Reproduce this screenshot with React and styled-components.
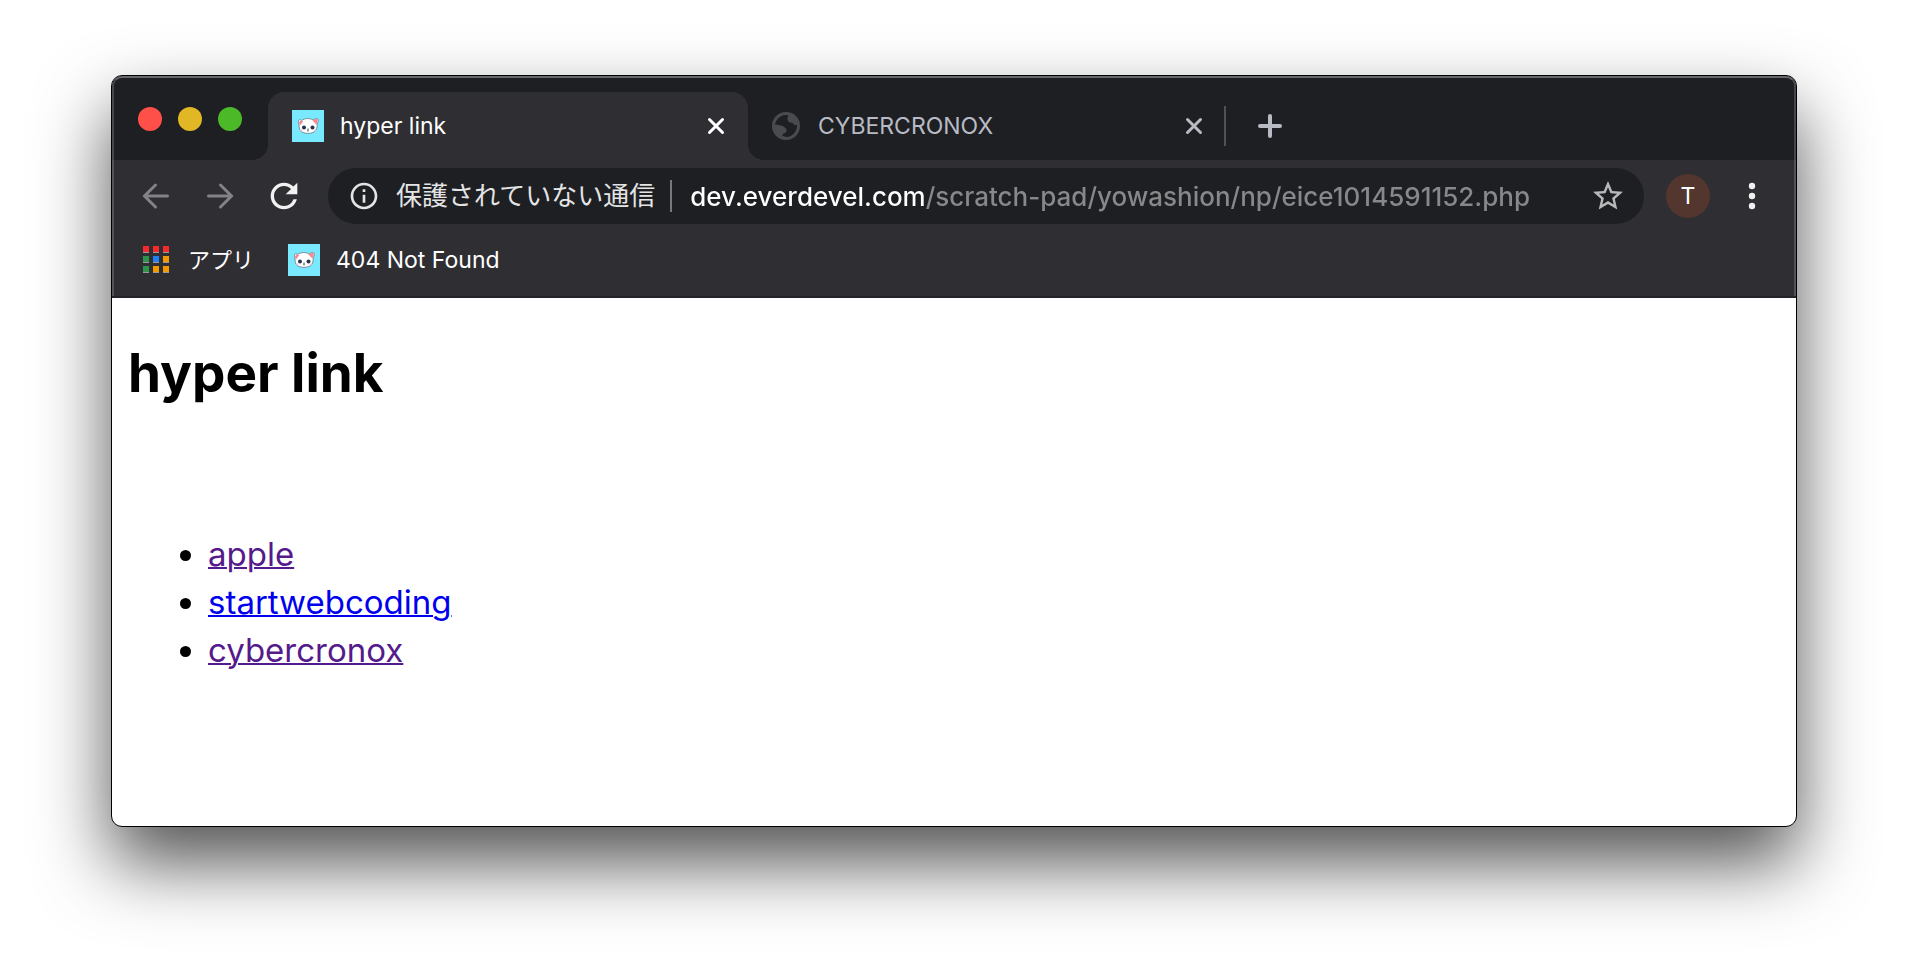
import React from 'react';
import styled, { createGlobalStyle, css } from 'styled-components';
import { MdRefresh, MdInfoOutline, MdStarBorder } from 'react-icons/md';

const GlobalStyle = createGlobalStyle`
  * {
    box-sizing: border-box;
  }
  body {
    margin: 0;
    background-color: #fff;
    font-family: Inter, 'Noto Sans CJK JP', sans-serif;
  }
  button {
    border: 0;
    padding: 0;
    background: none;
    font: inherit;
    color: inherit;
  }
  svg {
    display: block;
    flex-shrink: 0;
  }
`

const Desktop = styled.div`
  min-height: 100vh;
  padding: 75px 111px 147px;
  display: flex;
  overflow: hidden;
`

const BrowserWindow = styled.div`
  flex: 1;
  min-width: 0;
  display: flex;
  flex-direction: column;
  border: 1px solid #000;
  border-radius: 11px;
  background-color: #fff;
  box-shadow: 0 36px 72px rgba(0, 0, 0, 0.68);
`

const Header = styled.header`
  position: relative;
  background-color: #2f2e33;
  border-bottom: 2px solid #232427;
  border-radius: 10px 10px 0 0;
  overflow: hidden;

  &::after {
    content: '';
    position: absolute;
    inset: 0 0 -2px;
    border: 2px solid rgba(255, 255, 255, 0.18);
    border-top-color: #66686a;
    border-bottom: 0;
    border-radius: 10px 10px 0 0;
    pointer-events: none;
  }
`

const TabStrip = styled.div`
  display: flex;
  height: 84px;
  background-color: #1e1f23;
`

const Lights = styled.div`
  display: flex;
  align-items: center;
  gap: 16px;
  padding: 2px 26px 0;
`

const Light = styled.button`
  width: 24px;
  height: 24px;
  border-radius: 50%;
  background-color: ${props => props.$color};
`

const Tabs = styled.div`
  flex: 1;
  display: flex;
  align-items: center;
  margin-top: 16px;
  height: 68px;
`

const flare = css`
  content: '';
  position: absolute;
  bottom: 0;
  width: 16px;
  height: 16px;
`

const Tab = styled.div`
  position: relative;
  flex: 0 1 480px;
  height: 68px;
  display: flex;
  align-items: center;
  padding: 0 16px 0 24px;
  color: #b9bbc4;

  & + & {
    margin-left: -2px;
  }

  ${props => props.$active && css`
    background-color: #2f2e33;
    border-radius: 16px 16px 0 0;
    color: #fff;

    &::before {
      ${flare}
      left: -16px;
      background: radial-gradient(circle at 0 0, transparent 16px, #2f2e33 16px);
    }
    &::after {
      ${flare}
      right: -16px;
      background: radial-gradient(circle at 100% 0, transparent 16px, #2f2e33 16px);
    }
  `}
`

const TabTitle = styled.span`
  flex: 1;
  margin-left: 16px;
  font-size: 23px;
  line-height: 32px;
  white-space: nowrap;
`

const TabButton = styled.button`
  width: 32px;
  height: 32px;
  display: flex;
  align-items: center;
  justify-content: center;
`

const TabDivider = styled.div`
  width: 2px;
  height: 40px;
  margin: 0 28px 0 -2px;
  background-color: #505155;
`

const NewTabButton = styled(TabButton)`
  color: #b9bbc4;
`

const Toolbar = styled.div`
  display: flex;
  align-items: center;
  padding: 8px 12px;
`

const ToolButton = styled.button`
  width: 64px;
  height: 56px;
  display: flex;
  align-items: center;
  justify-content: center;
  color: ${props => props.disabled ? '#838387' : '#f1f1f2'};
`

const Omnibox = styled.form`
  flex: 1;
  height: 56px;
  margin: 0 22px 0 12px;
  padding: 0 18px 0 20px;
  display: flex;
  align-items: center;
  border-radius: 28px;
  background-color: #1e1f23;
`

const SiteInfo = styled.button`
  display: flex;
  align-items: center;
  gap: 16px;
  color: #e4e4e5;
  font-size: 26px;
  line-height: 32px;
  white-space: nowrap;
`

const OmniboxDivider = styled.div`
  width: 2px;
  height: 32px;
  margin: 0 18px 0 15px;
  background-color: #77787b;
`

const UrlInput = styled.input`
  flex: 1;
  min-width: 0;
  height: 40px;
  border: 0;
  padding: 0;
  outline: 0;
  font-family: inherit;
  font-size: 26px;
  font-weight: 500;
  background: linear-gradient(to right, #fff 236px, #87888a 236px);
  -webkit-background-clip: text;
  background-clip: text;
  color: transparent;
`

const StarButton = styled.button`
  color: #b8b9bb;
`

const Avatar = styled.button`
  width: 44px;
  height: 44px;
  margin-right: 10px;
  border-radius: 50%;
  background-color: #53372e;
  color: #fff;
  font-size: 23px;
  line-height: 44px;
`

const BookmarkBar = styled.nav`
  display: flex;
  align-items: center;
  height: 64px;
  padding: 0 28px 8px;
  gap: 34px;
`

const Bookmark = styled.a`
  display: flex;
  align-items: center;
  gap: 16px;
  color: #fff;
  font-size: 23px;
  line-height: 32px;
  text-decoration: none;

  &:lang(ja) {
    font-size: 22px;
  }
`

const Page = styled.main`
  padding: 0 16px;
  color: #000;
`

const Title = styled.h1`
  margin: 39px 0 121px;
  font-size: 53px;
  line-height: 72px;
`

const LinkList = styled.ul`
  margin: 0;
  padding-left: 80px;
  font-size: 33px;
  line-height: 48px;
`

const PageLink = styled.a`
  color: ${props => props.$visited ? '#551a8b' : '#0000ee'};
  text-decoration: underline;
  text-decoration-thickness: 2px;
`

const links = [
  { name: 'apple', visited: true },
  { name: 'startwebcoding', visited: false },
  { name: 'cybercronox', visited: true }
]

const appColors = [
  '#f6292c', '#f6292c', '#f6292c',
  '#2d9549', '#1f80f5', '#f29900',
  '#2d9549', '#f29900', '#f29900'
]

const CatIcon = () => (
  <svg width="32" height="32" viewBox="0 0 32 32">
    <path fill="#79e9ff" d="M0 0h32v32H0z" />
    <path fill="#fff" stroke="#67757e" strokeWidth="0.8" d="M9.500 10.500C7 8.500 5.800 10.500 7 13C6.800 15 7 18 8 20C10 24.500 22 24.500 24 20C25 18 25.500 16 25 14C27 11 26.500 8 24.500 8.500C23 9 22 9.500 21 10C18 8 13 8 9.500 10.500Z" />
    <path fill="#ff8291" d="M20.500 10.500l4.500-2q1.500 2-.6 6zM7.600 16l-.4-4q1.500-2 4-.8z" />
    <circle cx="12" cy="17.500" r="2" fill="#26354d" />
    <circle cx="20.500" cy="17.500" r="2" fill="#26354d" />
    <circle cx="9.500" cy="20" r="1.200" fill="#ffd5dc" />
    <circle cx="22.500" cy="20" r="1.200" fill="#ffd5dc" />
    <path stroke="#3c3c44" strokeWidth="1" d="M16 18.500v3" />
  </svg>
)

const GlobeIcon = () => (
  <svg width="32" height="32" viewBox="0 0 32 32">
    <circle cx="16" cy="16" r="14" fill="#4a4b4f" />
    <path fill="#1e1f23" d="M5 14.500C6 9.500 10 5.500 15.500 5L18.500 5.500C17 8 17 10 18.500 11.500C20 13 23 12 24 14.500C25 15.500 26 15 27 14.500C27.500 20 24 26 17 27L12.500 26C12 24 13 23.500 15 23C17 22 17.500 19 15 18C14 16 12 15.500 5 14.500Z" />
  </svg>
)

const CloseIcon = () => (
  <svg width="18" height="18" viewBox="0 0 18 18" stroke="currentColor" strokeWidth="3" strokeLinecap="round">
    <path d="M2.500 2.500l13 13M15.500 2.500l-13 13" />
  </svg>
)

const PlusIcon = () => (
  <svg width="24" height="24" viewBox="0 0 24 24" stroke="currentColor" strokeWidth="4" strokeLinecap="round">
    <path d="M12 2v20M2 12h20" />
  </svg>
)

const ArrowIcon = ({ forward }) => (
  <svg width="28" height="28" viewBox="0 0 28 28" fill="none" stroke="currentColor" strokeWidth="3" strokeLinecap="round">
    <path d={forward ? 'M2.500 14H25M14.500 3L25.500 14L14.500 25' : 'M25.500 14H3M13.500 3L2.500 14L13.500 25'} />
  </svg>
)

const AppsIcon = () => (
  <svg width="32" height="32" viewBox="0 0 32 32">
    {appColors.map((color, i) => (
      <g key={i} transform={`translate(${3 + (i % 3) * 10} ${2 + Math.floor(i / 3) * 10})`}>
        <path fill="#9a9a9a" d="M0 6h6v1H0z" />
        <path fill={color} d="M0 0h6v6H0z" />
      </g>
    ))}
  </svg>
)

const MenuIcon = () => (
  <svg width="8" height="28" viewBox="0 0 8 28" fill="currentColor">
    <circle cx="4" cy="4" r="3.200" />
    <circle cx="4" cy="14" r="3.200" />
    <circle cx="4" cy="24" r="3.200" />
  </svg>
)

class App extends React.Component {
  constructor(props) {
    super(props)
    this.state = {
      url: 'dev.everdevel.com/scratch-pad/yowashion/np/eice1014591152.php'
    }
  }

  render() {
    const { url } = this.state
    return (
      <>
        <GlobalStyle />
        <Desktop>
          <BrowserWindow>
            <Header>
              <TabStrip>
                <Lights>
                  <Light $color='#ff4f49' aria-label='Close window' />
                  <Light $color='#e1b726' aria-label='Minimize' />
                  <Light $color='#4bb928' aria-label='Zoom' />
                </Lights>
                <Tabs>
                  <Tab $active>
                    <CatIcon />
                    <TabTitle>hyper link</TabTitle>
                    <TabButton aria-label='Close tab'><CloseIcon /></TabButton>
                  </Tab>
                  <Tab>
                    <GlobeIcon />
                    <TabTitle>CYBERCRONOX</TabTitle>
                    <TabButton aria-label='Close tab'><CloseIcon /></TabButton>
                  </Tab>
                  <TabDivider />
                  <NewTabButton aria-label='New tab'><PlusIcon /></NewTabButton>
                </Tabs>
              </TabStrip>
              <Toolbar>
                <ToolButton disabled aria-label='Back'><ArrowIcon /></ToolButton>
                <ToolButton disabled aria-label='Forward'><ArrowIcon forward /></ToolButton>
                <ToolButton aria-label='Reload'><MdRefresh size={40} /></ToolButton>
                <Omnibox onSubmit={e => e.preventDefault()}>
                  <SiteInfo type='button'>
                    <MdInfoOutline size={32} />
                    保護されていない通信
                  </SiteInfo>
                  <OmniboxDivider />
                  <UrlInput
                    aria-label='Address'
                    value={url}
                    onChange={e => this.setState({ url: e.target.value })}
                  />
                  <StarButton type='button' aria-label='Bookmark'><MdStarBorder size={36} /></StarButton>
                </Omnibox>
                <Avatar aria-label='Profile'>T</Avatar>
                <ToolButton aria-label='Menu'><MenuIcon /></ToolButton>
              </Toolbar>
              <BookmarkBar>
                <Bookmark href='#' lang='ja'><AppsIcon />アプリ</Bookmark>
                <Bookmark href='#'><CatIcon />404 Not Found</Bookmark>
              </BookmarkBar>
            </Header>
            <Page>
              <Title>hyper link</Title>
              <LinkList>
                {links.map(link =>
                  <li key={link.name}>
                    <PageLink href='#' $visited={link.visited}>{link.name}</PageLink>
                  </li>
                )}
              </LinkList>
            </Page>
          </BrowserWindow>
        </Desktop>
      </>
    )
  }
}

export default App
